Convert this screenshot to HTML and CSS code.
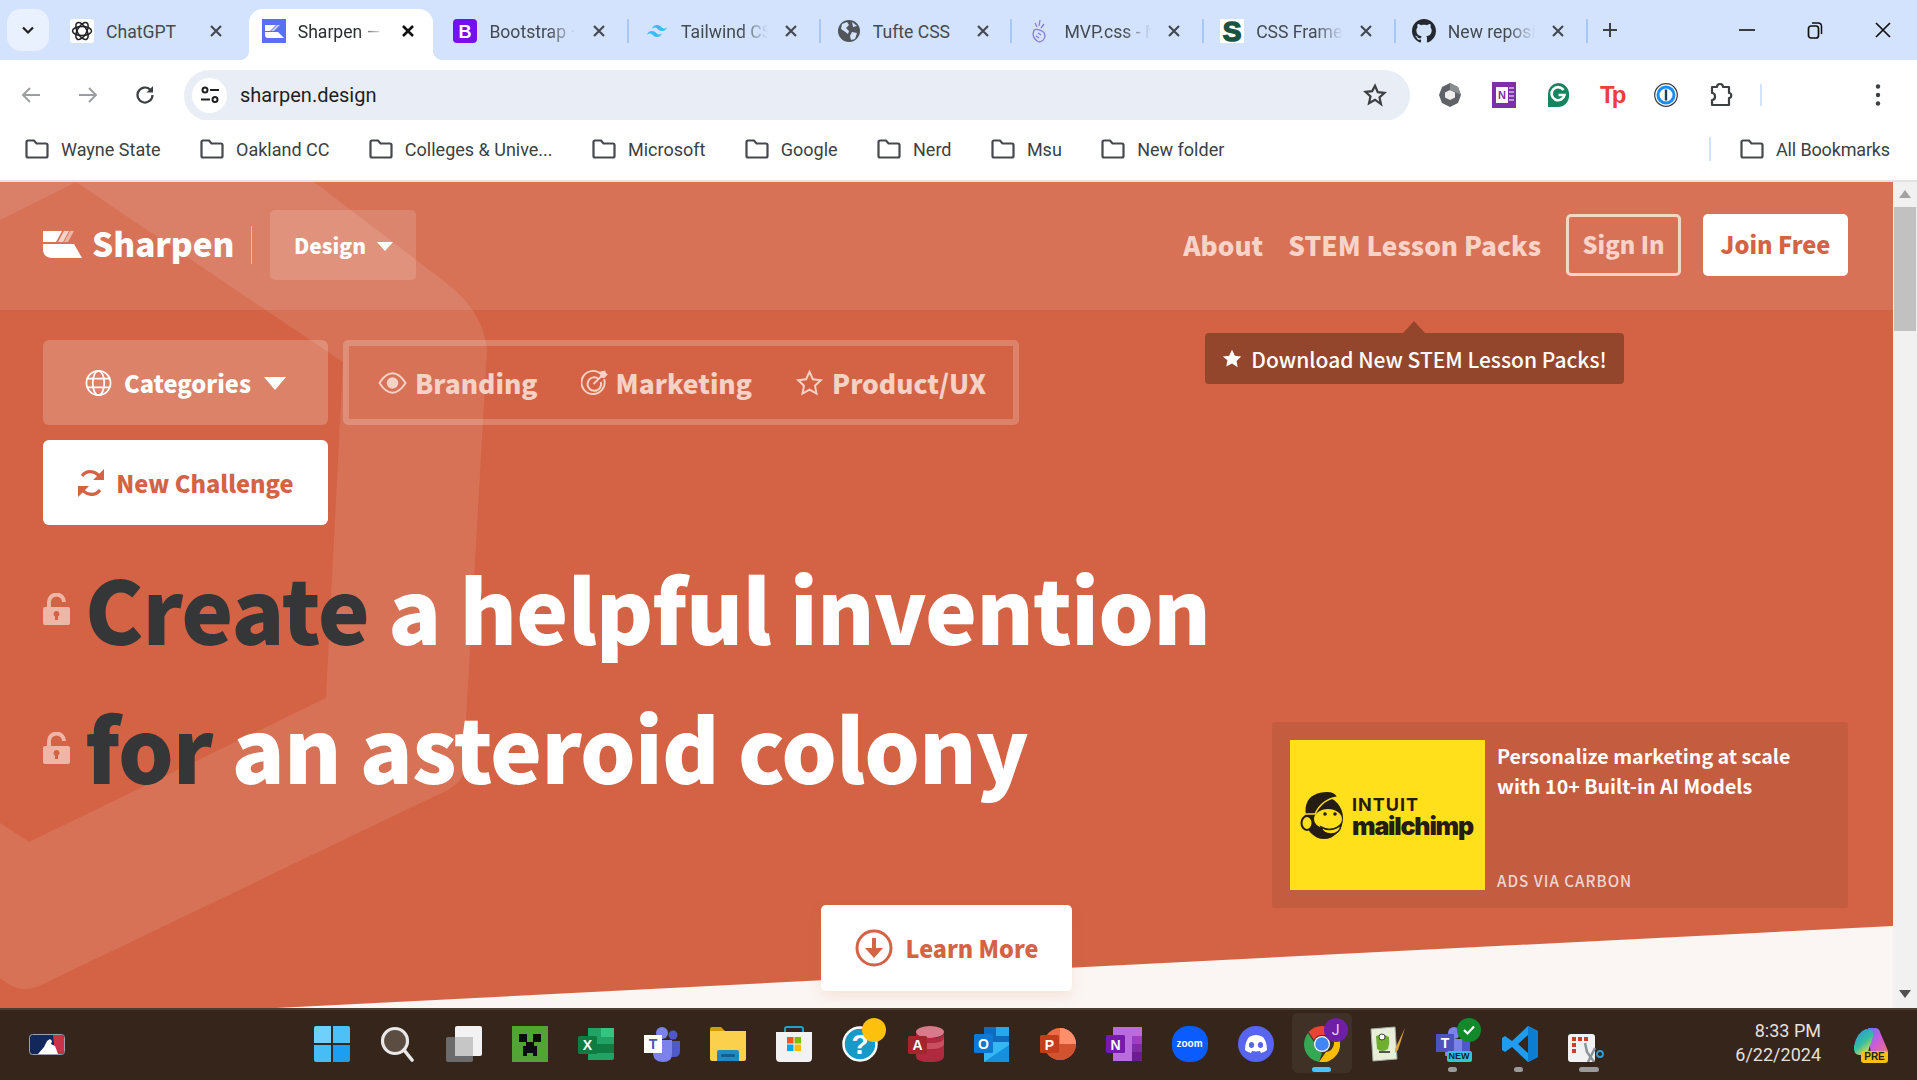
FILE: index.html
```html
<!DOCTYPE html>
<html lang="en">
<head>
<meta charset="utf-8">
<title>Sharpen</title>
<link rel="stylesheet" href="styles.css">
</head>
<body>
<header class="tabstrip">
  <div class="tabsearch"><svg width="16" height="16" viewBox="0 0 16 16"><path d="M3 5.500l5 5 5-5" fill="none" stroke="#1f1f1f" stroke-width="2.200"/></svg></div>
  <div class="tab"><span class="fav"><svg viewBox="0 0 24 24"><rect width="24" height="24" rx="3" fill="#fff"/><g fill="none" stroke="#222" stroke-width="1.500"><ellipse cx="12" cy="12" rx="9.500" ry="4.600"/><ellipse cx="12" cy="12" rx="9.500" ry="4.600" transform="rotate(60 12 12)"/><ellipse cx="12" cy="12" rx="9.500" ry="4.600" transform="rotate(120 12 12)"/></g></svg></span><span class="title">ChatGPT</span><svg class="x" viewBox="0 0 14 14"><path d="M2 2l10 10M12 2L2 12"/></svg></div>
  <div class="tab active"><span class="tab-bg"></span><span class="fav"><svg viewBox="0 0 24 24"><rect width="24" height="24" fill="#5b6ff2"/><path d="M3 6h11l-6 6H3z" fill="#fff"/><path d="M15 6h3l-6 6H9z" fill="#c5ccfb"/><path d="M3 13h13l6 6H6q-3 0-3-3z" fill="#fff"/></svg></span><span class="title fade">Sharpen — Design</span><svg class="x" viewBox="0 0 14 14"><path d="M2 2l10 10M12 2L2 12"/></svg></div>
  <div class="tab sep"><span class="fav"><svg viewBox="0 0 24 24"><rect width="24" height="24" rx="4" fill="#7311f0"/><text x="12" y="18.500" text-anchor="middle" class="svg-b" font-size="18" fill="#fff">B</text></svg></span><span class="title fade">Bootstrap · The most</span><svg class="x" viewBox="0 0 14 14"><path d="M2 2l10 10M12 2L2 12"/></svg></div>
  <div class="tab sep"><span class="fav"><svg viewBox="0 0 24 24"><path fill="#38bdf8" d="M12 6c-2.670 0-4.330 1.330-5 4 1-1.330 2.170-1.830 3.500-1.500.76.19 1.310.74 1.910 1.350.98 1 2.090 2.150 4.590 2.150 2.670 0 4.330-1.330 5-4-1 1.330-2.170 1.830-3.500 1.500-.76-.19-1.300-.74-1.910-1.350C15.610 7.150 14.500 6 12 6zm-5 6c-2.670 0-4.330 1.330-5 4 1-1.330 2.170-1.830 3.500-1.500.76.19 1.300.74 1.910 1.350C8.390 16.850 9.500 18 12 18c2.670 0 4.330-1.330 5-4-1 1.330-2.170 1.830-3.500 1.500-.76-.19-1.300-.74-1.910-1.350C10.610 13.150 9.500 12 7 12z"/></svg></span><span class="title fade">Tailwind CSS - Rapidly</span><svg class="x" viewBox="0 0 14 14"><path d="M2 2l10 10M12 2L2 12"/></svg></div>
  <div class="tab sep"><span class="fav"><svg viewBox="0 0 24 24"><circle cx="12" cy="12" r="11" fill="#50555c"/><path d="M5 5l5-2 2 3-3 3 3 3-1 3-4-3-3-2zM15 13l5 1-2 6-4 1-1-4zM15 3l5 4-4 1z" fill="#d3e3fd"/></svg></span><span class="title">Tufte CSS</span><svg class="x" viewBox="0 0 14 14"><path d="M2 2l10 10M12 2L2 12"/></svg></div>
  <div class="tab sep"><span class="fav"><svg viewBox="0 0 24 24"><g fill="none" stroke="#8a7be0" stroke-width="1.300"><path d="M6 11c3-2 5 0 8 1 2 1 3 3 3 5 0 3-3 6-6 6-3-1-6-5-6-8z"/><path d="M7 4l2 4M12 1l-1 6M16 5l-3 4M10 14l3 2M8 17l3 2"/></g></svg></span><span class="title fade">MVP.css - Minimalist</span><svg class="x" viewBox="0 0 14 14"><path d="M2 2l10 10M12 2L2 12"/></svg></div>
  <div class="tab sep"><span class="fav"><svg viewBox="0 0 24 24"><rect width="24" height="24" fill="#fff"/><text x="12" y="22" text-anchor="middle" class="svg-b" font-size="28" stroke="#18543f" stroke-width="1.500" fill="#18543f">S</text></svg></span><span class="title fade">CSS Frameworks</span><svg class="x" viewBox="0 0 14 14"><path d="M2 2l10 10M12 2L2 12"/></svg></div>
  <div class="tab sep"><span class="fav"><svg viewBox="0 0 16 16"><path fill="#24292f" d="M8 0C3.580 0 0 3.580 0 8c0 3.540 2.290 6.530 5.470 7.590.4.070.55-.17.55-.38 0-.19-.01-.82-.01-1.490-2.010.37-2.530-.49-2.690-.94-.09-.23-.48-.94-.82-1.130-.28-.15-.68-.52-.01-.53.63-.01 1.080.58 1.230.82.72 1.210 1.870.87 2.330.66.07-.52.28-.87.51-1.070-1.780-.2-3.640-.89-3.640-3.950 0-.87.31-1.590.82-2.150-.08-.2-.36-1.020.08-2.120 0 0 .67-.21 2.200.82.64-.18 1.320-.27 2-.27.68 0 1.360.09 2 .27 1.530-1.040 2.200-.82 2.200-.82.44 1.100.16 1.920.08 2.120.51.56.82 1.270.82 2.150 0 3.070-1.870 3.750-3.650 3.950.29.25.54.73.54 1.480 0 1.070-.01 1.930-.01 2.200 0 .21.15.46.55.38A8.013 8.013 0 0016 8c0-4.420-3.580-8-8-8z"/></svg></span><span class="title fade">New repository</span><svg class="x" viewBox="0 0 14 14"><path d="M2 2l10 10M12 2L2 12"/></svg></div>
  <svg class="plus" width="18" height="18" viewBox="0 0 18 18"><path d="M9 2v14M2 9h14" stroke="#3c4043" stroke-width="2"/></svg>
  <div class="winctl">
    <span class="ctl"><svg width="16" height="16" viewBox="0 0 16 16"><path d="M0 8h16" stroke="#111" stroke-width="1.600"/></svg></span>
    <span class="ctl"><svg width="16" height="18" viewBox="0 0 16 18"><rect x="1.500" y="5" width="10" height="12" rx="2.500" fill="none" stroke="#111" stroke-width="1.700"/><path d="M5 2h6q3.500 0 3.500 3.500V13" fill="none" stroke="#111" stroke-width="1.500"/></svg></span>
    <span class="ctl"><svg width="18" height="18" viewBox="0 0 18 18"><path d="M2 2l14 14M16 2L2 16" stroke="#111" stroke-width="1.700"/></svg></span>
  </div>
</header>

<div class="toolbar">
  <div class="navbtns">
    <svg width="24" height="24" viewBox="0 0 24 24"><path d="M21 12H4M11 5l-7 7 7 7" fill="none" stroke="#9a9da1" stroke-width="1.900"/></svg>
    <svg width="24" height="24" viewBox="0 0 24 24"><path d="M3 12h17M13 5l7 7-7 7" fill="none" stroke="#9a9da1" stroke-width="1.900"/></svg>
    <svg width="24" height="24" viewBox="0 0 24 24"><path d="M19.500 12a7.500 7.500 0 1 1-2.300-5.400" fill="none" stroke="#3c4043" stroke-width="2.200"/><path d="M20 3v6.500h-6.500z" fill="#3c4043"/></svg>
  </div>
  <div class="omnibox">
    <span class="sitechip"><svg width="20" height="20" viewBox="0 0 20 20"><g fill="none" stroke="#1f1f1f" stroke-width="2"><circle cx="5" cy="5" r="2.500"/><path d="M10 5h9M1 14.500h9"/><circle cx="15" cy="14.500" r="2.500"/></g></svg></span>
    <span class="url">sharpen.design</span>
    <svg class="star" width="24" height="24" viewBox="0 0 24 24"><path d="M12 2.800l2.800 6.300 6.800.7-5.100 4.600 1.500 6.800L12 16.700l-6 3.500 1.500-6.800-5.100-4.600 6.800-.7z" fill="none" stroke="#3c4043" stroke-width="2.200"/></svg>
  </div>
  <div class="exts">
    <svg width="24" height="26" viewBox="0 0 24 26"><path d="M12 1l8 4 3 8-3 8-8 4-8-4-3-8 3-8z" fill="#5f6368"/><path d="M12 8l5 2.500v5L12 18l-5-2.500v-5z" fill="#eee"/><path d="M12 1l8 4 3 8-6-3-5-2z" fill="#8a8d90"/></svg>
    <svg width="24" height="26" viewBox="0 0 24 26"><rect width="24" height="26" fill="#7b2fa8"/><rect x="4" y="5" width="12" height="16" fill="#fff"/><text x="10" y="17" text-anchor="middle" class="svg-b" font-size="11" fill="#7b2fa8">N</text><path d="M17 6h5M17 10h5M17 14h5M17 18h5" stroke="#d8b9ea" stroke-width="1.500"/></svg>
    <svg width="24" height="26" viewBox="0 0 24 26"><path d="M12 1a11 11 0 0 1 11 11v2a11 11 0 0 1-11 11H2V12A11 11 0 0 1 12 1z" fill="#15845f"/><path d="M17.500 8a6.500 6.500 0 1 0 1 5h-6" fill="none" stroke="#fff" stroke-width="2.600"/></svg>
    <span class="tp">Tp</span>
    <svg width="24" height="24" viewBox="0 0 24 24"><circle cx="12" cy="12" r="11.300" fill="#fff" stroke="#3a3f44" stroke-width="1.200"/><circle cx="12" cy="12" r="8" fill="none" stroke="#1a8cff" stroke-width="3"/><rect x="10.800" y="6.500" width="2.400" height="11" fill="#1d3e66"/></svg>
    <svg width="26" height="26" viewBox="0 0 26 26"><path d="M3 5h5c0-4 6-4 6 0h6v6c3 0 3 5 0 5v7H3v-5c4 0 4-7 0-7z" fill="none" stroke="#3c4043" stroke-width="2.200" stroke-linejoin="round"/></svg>
    <span class="extsep"></span>
    <svg class="dots" width="6" height="24" viewBox="0 0 6 24"><g fill="#3c4043"><circle cx="3" cy="3.500" r="2.200"/><circle cx="3" cy="12" r="2.200"/><circle cx="3" cy="20.500" r="2.200"/></g></svg>
  </div>
</div>

<nav class="bookmarks">
  <a class="bm"><svg class="folder" viewBox="0 0 24 20"><path d="M1.500 3q0-1.500 1.500-1.500h6l2.500 3H21q1.500 0 1.500 1.500v11q0 1.500-1.500 1.500H3q-1.500 0-1.500-1.500z"/></svg>Wayne State</a>
  <a class="bm"><svg class="folder" viewBox="0 0 24 20"><path d="M1.500 3q0-1.500 1.500-1.500h6l2.500 3H21q1.500 0 1.500 1.500v11q0 1.500-1.500 1.500H3q-1.500 0-1.500-1.500z"/></svg>Oakland CC</a>
  <a class="bm"><svg class="folder" viewBox="0 0 24 20"><path d="M1.500 3q0-1.500 1.500-1.500h6l2.500 3H21q1.500 0 1.500 1.500v11q0 1.500-1.500 1.500H3q-1.500 0-1.500-1.500z"/></svg>Colleges &amp; Unive...</a>
  <a class="bm"><svg class="folder" viewBox="0 0 24 20"><path d="M1.500 3q0-1.500 1.500-1.500h6l2.500 3H21q1.500 0 1.500 1.500v11q0 1.500-1.500 1.500H3q-1.500 0-1.500-1.500z"/></svg>Microsoft</a>
  <a class="bm"><svg class="folder" viewBox="0 0 24 20"><path d="M1.500 3q0-1.500 1.500-1.500h6l2.500 3H21q1.500 0 1.500 1.500v11q0 1.500-1.500 1.500H3q-1.500 0-1.500-1.500z"/></svg>Google</a>
  <a class="bm"><svg class="folder" viewBox="0 0 24 20"><path d="M1.500 3q0-1.500 1.500-1.500h6l2.500 3H21q1.500 0 1.500 1.500v11q0 1.500-1.500 1.500H3q-1.500 0-1.500-1.500z"/></svg>Nerd</a>
  <a class="bm"><svg class="folder" viewBox="0 0 24 20"><path d="M1.500 3q0-1.500 1.500-1.500h6l2.500 3H21q1.500 0 1.500 1.500v11q0 1.500-1.500 1.500H3q-1.500 0-1.500-1.500z"/></svg>Msu</a>
  <a class="bm"><svg class="folder" viewBox="0 0 24 20"><path d="M1.500 3q0-1.500 1.500-1.500h6l2.500 3H21q1.500 0 1.500 1.500v11q0 1.500-1.500 1.500H3q-1.500 0-1.500-1.500z"/></svg>New folder</a>
  <span class="bmsep"></span>
  <a class="bm"><svg class="folder" viewBox="0 0 24 20"><path d="M1.500 3q0-1.500 1.500-1.500h6l2.500 3H21q1.500 0 1.500 1.500v11q0 1.500-1.500 1.500H3q-1.500 0-1.500-1.500z"/></svg>All Bookmarks</a>
</nav>

<div class="viewport">
  <main class="hero">
    <svg class="bgshape" width="520" height="827" viewBox="0 182 520 827"><path fill="#fff" fill-opacity=".1" fill-rule="evenodd" d="M0 182H314L445 282Q484 312 487 350L463 773Q462 785 433 797L41 985Q24 993 10 985L0 978ZM0 220L76 182L343 362L326 698L29 842L0 823Z"/></svg>
    <div class="topnav">
      <svg class="logo" width="39" height="27" viewBox="0 0 39 27"><path d="M0 0H19L13 11H0z" fill="#fff"/><path d="M21 0h5l-6 11h-5z" fill="#f6d3c9"/><path d="M27 0h4l-6 11h-4z" fill="#eeb4a3"/><path d="M0 13H31L39 27H10Q0 27 0 18z" fill="#fff"/></svg>
      <span class="brand">Sharpen</span>
      <span class="brand-div"></span>
      <button class="design">Design<span class="caret small"></span></button>
      <div class="navlinks">
        <a class="navlink">About</a>
        <a class="navlink">STEM Lesson Packs</a>
        <a class="signin">Sign In</a>
        <a class="join">Join Free</a>
      </div>
    </div>
    <div class="tooltip"><svg width="20" height="20" viewBox="0 0 24 24"><path d="M12 1l3.400 7 7.600 1-5.500 5.400 1.300 7.600L12 17.500 5.200 21l1.300-7.600L1 9l7.600-1z" fill="#fff"/></svg>Download New STEM Lesson Packs!</div>
    <div class="controls">
      <div class="row">
        <button class="catbtn"><svg width="27" height="28" viewBox="0 0 28 28"><g fill="none" stroke="#fff" stroke-width="1.800"><circle cx="14" cy="14" r="12.500"/><ellipse cx="14" cy="14" rx="6" ry="12.500"/><path d="M2 9.500h24M2 18.500h24"/></g></svg>Categories<span class="caret"></span></button>
        <div class="filters">
          <span class="filter"><svg width="29" height="24" viewBox="0 0 30 24"><path d="M1.500 12Q8 2 15 2t13.500 10Q22 22 15 22T1.500 12z" fill="none" stroke="#f6d1c6" stroke-width="2"/><circle cx="15" cy="12" r="6" fill="#f6d1c6"/></svg>Branding</span>
          <span class="filter"><svg width="27" height="28" viewBox="0 0 28 28"><g fill="none" stroke="#f6d1c6" stroke-width="2"><path d="M21 5a12 12 0 1 0 3 5"/><path d="M18 9.500a7 7 0 1 0 2.500 3.500"/><path d="M13 15L23 5"/></g><path d="M20 2l5-1 1 3 2 1-4 4-4-1z" fill="#f6d1c6"/></svg>Marketing</span>
          <span class="filter"><svg width="29" height="28" viewBox="0 0 24 24"><path d="M12 2.500l2.900 6.300 6.800.8-5 4.700 1.300 6.800-6-3.400-6 3.400 1.300-6.800-5-4.700 6.800-.8z" fill="none" stroke="#f6d1c6" stroke-width="1.700"/></svg>Product/UX</span>
        </div>
      </div>
      <button class="newbtn"><svg width="28" height="30" viewBox="0 0 28 30"><g fill="none" stroke="#d36344" stroke-width="3.200"><path d="M23.500 11A10.500 10.500 0 0 0 5 8"/><path d="M4.500 19A10.500 10.500 0 0 0 23 22"/></g><path d="M27 1v11H16zM1 29V18h11z" fill="#d36344"/></svg>New Challenge</button>
    </div>
    <div class="lead">
      <h1 class="headline">
        <span class="hline"><svg class="lock" width="27" height="32" viewBox="0 0 27 32"><path d="M2 14h23q2 0 2 2v14q0 2-2 2H2q-2 0-2-2V16q0-2 2-2zm11.500 4a3 3 0 0 0-1.500 5.600V27h3v-3.400a3 3 0 0 0-1.500-5.600z" fill="#eeb6a6"/><path d="M6 14V9a7.500 7.500 0 0 1 15 0" fill="none" stroke="#eeb6a6" stroke-width="4"/></svg><span class="dark">Create</span> a helpful invention</span>
        <span class="hline"><svg class="lock" width="27" height="32" viewBox="0 0 27 32"><path d="M2 14h23q2 0 2 2v14q0 2-2 2H2q-2 0-2-2V16q0-2 2-2zm11.500 4a3 3 0 0 0-1.500 5.600V27h3v-3.400a3 3 0 0 0-1.500-5.600z" fill="#eeb6a6"/><path d="M6 14V9a7.500 7.500 0 0 1 15 0" fill="none" stroke="#eeb6a6" stroke-width="4"/></svg><span class="dark">for</span> an asteroid colony</span>
      </h1>
      <aside class="ad">
        <div class="adimg">
          <svg width="46" height="50" viewBox="0 0 46 50"><ellipse cx="24" cy="28" rx="19" ry="21" fill="#241c15"/><path d="M5 24Q3 6 20 2q14-3 18 5-16 2-23 17z" fill="#241c15" stroke="#ffe01b" stroke-width="1.500"/><ellipse cx="7" cy="33" rx="5.500" ry="7" fill="#ffe01b" stroke="#241c15" stroke-width="2"/><ellipse cx="28" cy="29" rx="14" ry="10" fill="#ffe01b"/><path d="M21 37q10 6 20-2-1 9-10 9-8 0-10-7z" fill="#ffe01b" stroke="#241c15" stroke-width="1.500"/><circle cx="25" cy="24" r="1.800" fill="#241c15"/><circle cx="35" cy="24" r="1.800" fill="#241c15"/></svg>
          <div class="adlogo"><span class="intuit">INTUIT</span><span class="mailchimp">mailchimp</span></div>
        </div>
        <div class="adtext">
          <p class="adcopy">Personalize marketing at scale<br>with 10+ Built-in AI Models</p>
          <p class="advia">ADS VIA CARBON</p>
        </div>
      </aside>
    </div>
    <div class="cta"><button class="learn"><svg width="38" height="38" viewBox="0 0 38 38"><circle cx="19" cy="19" r="17" fill="none" stroke="#d36344" stroke-width="3"/><path d="M19 9v13" stroke="#d36344" stroke-width="4"/><path d="M10 19h18l-9 10z" fill="#d36344"/></svg>Learn More</button></div>
  </main>
  <aside class="scrollbar">
    <span class="arrow up"></span>
    <span class="thumb"></span>
    <span class="arrow down"></span>
  </aside>
</div>

<footer class="taskbar">
  <svg class="mlb" width="36" height="21" viewBox="0 0 36 21"><rect x=".5" y=".5" width="35" height="20" rx="3" fill="#13285a" stroke="#9aa0ac"/><path d="M24 1h8q3 0 3 3v13q0 3-3 3h-6z" fill="#c8334a"/><path d="M9 20l6-7 3-6 3-2 2 2-1 3 4 2 3 8z" fill="#fff"/></svg>
  <div class="apps">
    <svg class="app" viewBox="0 0 36 36"><path d="M0 2q0-2 2-2h15v17H0z" fill="#6fd0fb"/><path d="M19 0h15q2 0 2 2v15H19z" fill="#4cc0f7"/><path d="M0 19h17v17H2q-2 0-2-2z" fill="#47bdf6"/><path d="M19 19h17v15q0 2-2 2H19z" fill="#1b9ff2"/></svg>
    <svg class="app" viewBox="0 0 36 36"><circle cx="15" cy="15" r="12.500" fill="#5c4d42" stroke="#e8e8e8" stroke-width="3.200"/><path d="M24 24l8 10" stroke="#e8e8e8" stroke-width="3.600" stroke-linecap="round"/></svg>
    <svg class="app" viewBox="0 0 36 36"><rect x="0" y="11" width="27" height="25" rx="2" fill="#6b6b6b"/><rect x="9" y="0" width="27" height="30" rx="2" fill="#f2f2f2"/><rect x="9" y="11" width="18" height="19" fill="#c6c6c6"/></svg>
    <svg class="app" viewBox="0 0 36 36"><rect width="36" height="36" fill="#52a535"/><path d="M7 8h8v8H7zM21 8h8v8h-8zM14 16h8v4h3v10h-4v-3h-6v3h-4V20h3z" fill="#0c0c0c"/></svg>
    <svg class="app" viewBox="0 0 36 36"><path d="M10 2h24q2 0 2 2v28q0 2-2 2H10z" fill="#21a366"/><path d="M23 2h13v9H23z" fill="#33c481"/><path d="M10 18h26v9H10z" fill="#107c41"/><rect x="0" y="10" width="19" height="18" rx="1.500" fill="#107c41"/><text x="9.500" y="24" text-anchor="middle" class="svg-b" font-size="14" fill="#fff">X</text></svg>
    <svg class="app" viewBox="0 0 36 36"><circle cx="18" cy="7" r="6" fill="#7b83eb"/><circle cx="29" cy="9" r="4.500" fill="#5059c9"/><path d="M23 15h13v10q0 6-6 6h-7z" fill="#5059c9"/><path d="M9 14h19v14q0 8-9 8t-10-8z" fill="#7b83eb"/><rect x="0" y="9" width="18" height="18" fill="#fff"/><text x="9" y="23" text-anchor="middle" class="svg-b" font-size="14" fill="#4b53bc">T</text></svg>
    <svg class="app" viewBox="0 0 36 36"><path d="M0 3q0-2 2-2h9l4 4H0z" fill="#d29c0c"/><path d="M0 5h36v28q0 2-2 2H2q-2 0-2-2z" fill="#fbd04c"/><path d="M7 35v-9q0-2 2-2h18q2 0 2 2v9z" fill="#1f8bc4"/><rect x="11" y="28" width="14" height="3" rx="1" fill="#0e5f96"/></svg>
    <svg class="app" viewBox="0 0 36 36"><path d="M9 6V3q0-2 2-2h14q2 0 2 2v3" fill="none" stroke="#1ba3c9" stroke-width="2"/><path d="M0 6h36v26q0 4-4 4H4q-4 0-4-4z" fill="#f2f2f2"/><path d="M11 11h6.500v6.500H11z" fill="#f35325"/><path d="M18.500 11H25v6.500h-6.500z" fill="#81bc06"/><path d="M11 18.500h6.500V25H11z" fill="#05a6f0"/><path d="M18.500 18.500H25V25h-6.500z" fill="#ffba08"/></svg>
    <span class="app help"><svg viewBox="0 0 36 36"><circle cx="18" cy="18" r="16.500" fill="#189ac9" stroke="#fff" stroke-width="2.500"/><text x="18" y="28" text-anchor="middle" class="svg-b" font-size="28" fill="#fff">?</text></svg><i class="dot"></i></span>
    <svg class="app" viewBox="0 0 36 36"><ellipse cx="22" cy="6" rx="14" ry="6" fill="#d87a8c"/><path d="M8 6v24q0 6 14 6t14-6V6q0 6-14 6T8 6z" fill="#b02a3f"/><path d="M8 17q0 6 14 6t14-6v-5.500q0 5.500-14 5.500T8 11.500z" fill="#c9505f"/><rect y="10" width="19" height="18" rx="1.500" fill="#a4262c"/><text x="9.500" y="24" text-anchor="middle" class="svg-b" font-size="14" fill="#fff">A</text></svg>
    <svg class="app" viewBox="0 0 36 36"><rect x="10" y="1" width="25" height="18" fill="#0f6cbd"/><path d="M22 1h13v9H22z" fill="#28a8ea"/><path d="M10 16l25 0v20H10z" fill="#35b8f1"/><path d="M10 36l25-17v17z" fill="#1490df"/><rect y="8" width="19" height="19" rx="1.500" fill="#0f78d4"/><text x="9.500" y="23" text-anchor="middle" class="svg-b" font-size="14" fill="#fff">O</text></svg>
    <svg class="app" viewBox="0 0 36 36"><circle cx="20" cy="18" r="16" fill="#ed6c47"/><path d="M20 2a16 16 0 0 1 16 16H20z" fill="#ff8f6b"/><path d="M4 18h32a16 16 0 0 1-16 16 16 16 0 0 1-16-16z" fill="#d35230"/><rect y="9" width="19" height="18" rx="1.500" fill="#c43e1c"/><text x="9.500" y="23.500" text-anchor="middle" class="svg-b" font-size="14" fill="#fff">P</text></svg>
    <svg class="app" viewBox="0 0 36 36"><rect x="7" y="1" width="29" height="34" fill="#ba6bde"/><path d="M26 10h10v8H26z" fill="#9b3fc4"/><path d="M26 18h10v8H26z" fill="#7e2da8"/><path d="M26 26h10v9H26z" fill="#6a1e91"/><rect y="9" width="19" height="18" rx="1.500" fill="#7719aa"/><text x="9.500" y="23.500" text-anchor="middle" class="svg-b" font-size="14" fill="#fff">N</text></svg>
    <span class="app zoomapp">zoom</span>
    <svg class="app" viewBox="0 0 36 36"><circle cx="18" cy="18" r="18" fill="#5865f2"/><path d="M11 11q4-2 7-2t7 2q4 5 4 13-2 2-6 3l-1-2-4 .5-4-.5-1 2q-4-1-6-3 0-8 4-13z" fill="#fff"/><ellipse cx="13.500" cy="19" rx="2.600" ry="3" fill="#5865f2"/><ellipse cx="22.500" cy="19" rx="2.600" ry="3" fill="#5865f2"/></svg>
    <span class="chromewrap"><svg class="app" viewBox="0 0 36 36"><path d="M18 0a18 18 0 0 1 15.600 9H18a9 9 0 0 0-8 5L4.500 6A18 18 0 0 1 18 0z" fill="#ea4335"/><path d="M4 7l8 12a9 9 0 0 0 6 8l-3 9A18 18 0 0 1 4 7z" fill="#34a853"/><path d="M33.600 9A18 18 0 0 1 15 36l7-10a9 9 0 0 0 3-17z" fill="#fbbc04"/><circle cx="18" cy="18" r="8" fill="#fff"/><circle cx="18" cy="18" r="6.800" fill="#4285f4"/></svg><i class="avatar">J</i><i class="runbar"></i></span>
    <svg class="app" viewBox="0 0 36 36"><path d="M1 3l24-2 2 32-24 2z" fill="#e8efd8" stroke="#aaa"/><path d="M6 10q7-3 13 1 1 6-1 12-6 4-11 0z" fill="#6fae2e"/><path d="M9 26h11" stroke="#222" stroke-width="1.500"/><circle cx="12" cy="11" r="3" fill="#fff" stroke="#444"/><path d="M35 2l-7 22-3 3 0-4z" fill="#e0a63a"/></svg>
    <span class="app teamsnew"><svg viewBox="0 0 36 36"><circle cx="18" cy="7" r="6" fill="#7b83eb"/><path d="M23 13h11v12h-11z" fill="#5059c9"/><path d="M9 13h17v17H9z" fill="#7b83eb"/><rect y="8" width="18" height="18" fill="#4b53bc"/><text x="9" y="22" text-anchor="middle" class="svg-b" font-size="14" fill="#fff">T</text></svg><i class="check"><svg width="14" height="14" viewBox="0 0 14 14"><path d="M2 7l3.500 3.500L12 3.500" fill="none" stroke="#fff" stroke-width="2.200"/></svg></i><i class="newtag">NEW</i><i class="pip"></i></span>
    <span class="app vswrap"><svg viewBox="0 0 36 36"><path d="M26 0l10 5v26l-10 5-16-15-7 5-3-2V12l3-2 7 5zM26 9l-10 9 10 9z" fill="#1f9cf0"/><path d="M26 0l10 5v26l-10 5V27V9z" fill="#0c7dd0"/></svg><i class="pip"></i></span>
    <span class="app snip"><svg viewBox="0 0 36 36"><rect x="0" y="8" width="27" height="28" rx="3" fill="#f2f2f2"/><path d="M4 11h4v4H4zM10 11h4v4h-4zM16 11h4v4h-4zM4 17h4v4H4zM4 23h4v4H4z" fill="#c8402a"/><path d="M17 17l2 9 7 10M27 22l-7 14" stroke="#8c949c" stroke-width="2.500" fill="none"/><circle cx="32" cy="28" r="3" fill="none" stroke="#2d9fd8" stroke-width="1.800"/></svg><i class="pip wide"></i></span>
  </div>
  <div class="clock"><span>8:33 PM</span><span>6/22/2024</span></div>
  <span class="copilot"><svg width="36" height="36" viewBox="0 0 36 36"><defs><linearGradient id="cpa" x1="0" y1="0" x2=".6" y2="1"><stop offset="0" stop-color="#2a8fe8"/><stop offset=".6" stop-color="#35c0a0"/><stop offset="1" stop-color="#e8d84a"/></linearGradient><linearGradient id="cpb" x1="0" y1="0" x2="1" y2="1"><stop offset="0" stop-color="#5a7df0"/><stop offset=".5" stop-color="#d05ad8"/><stop offset="1" stop-color="#f07a5f"/></linearGradient></defs><path d="M15 1h7q4 0 5 4l8 19q1 5-4 5H18z" fill="url(#cpb)"/><path d="M13 2Q4 5 1 19q-1 9 6 9h7l6-19q1-7-7-7z" fill="url(#cpa)"/></svg><i class="pre">PRE</i></span>
</footer>
</body>
</html>
```

FILE: styles.css
```css
* { box-sizing: border-box; }
html, body { margin: 0; height: 100%; }
body {
  width: 1917px;
  height: 1080px;
  overflow: hidden;
  display: flex;
  flex-direction: column;
  font-family: "Roboto", "Noto Sans", sans-serif;
  background: #fff;
}
i { font-style: normal; }
button { font: inherit; border: 0; cursor: pointer; }
a { color: inherit; text-decoration: none; }
.svg-b { font-family: "Liberation Sans", sans-serif; font-weight: 700; }

/* tab strip */
.tabstrip {
  height: 60px;
  flex: none;
  display: flex;
  align-items: flex-end;
  background: #d3e3fd;
  padding-left: 7px;
}
.tabsearch {
  width: 42px;
  height: 42px;
  margin: 0 8px 9px 0;
  border-radius: 14px;
  background: #e9f0fe;
  display: flex;
  align-items: center;
  justify-content: center;
}
.tab {
  position: relative;
  width: 191.7px;
  height: 51px;
  padding-left: 13px;
  display: flex;
  align-items: center;
  flex: none;
  color: #444a52;
  font-size: 17.6px;
}
.tab.sep::after {
  content: "";
  position: absolute;
  right: 3px;
  top: 10px;
  width: 2px;
  height: 24px;
  background: #a8c7f5;
}
.tab-bg {
  position: absolute;
  left: 0;
  top: 0;
  width: 184px;
  height: 51px;
  background: #fff;
  border-radius: 14px 14px 0 0;
}
.tab-bg::before, .tab-bg::after {
  content: "";
  position: absolute;
  bottom: 0;
  width: 10px;
  height: 10px;
}
.tab-bg::before { left: -10px; background: radial-gradient(circle at 0 0, transparent 10px, #fff 10.5px); }
.tab-bg::after { right: -10px; background: radial-gradient(circle at 100% 0, transparent 10px, #fff 10.5px); }
.active { color: #2a2d31; }
.fav { position: relative; width: 24px; height: 24px; flex: none; margin-top: -7px; }
.fav svg { display: block; width: 24px; height: 24px; }
.title {
  position: relative;
  width: 99px;
  margin: -6px 0 0 12px;
  white-space: nowrap;
  overflow: hidden;
}
.fade { -webkit-mask-image: linear-gradient(90deg, #000 60%, transparent 88%); mask-image: linear-gradient(90deg, #000 60%, transparent 88%); }
.x {
  position: relative;
  width: 14px;
  height: 14px;
  margin: -7px 0 0 4px;
  flex: none;
  fill: none;
  stroke: #444a52;
  stroke-width: 2.2;
}
.active .x { stroke: #111; stroke-width: 2.6; }
.plus { margin: 0 0 21px 10px; flex: none; }
.winctl { margin-left: auto; display: flex; align-self: stretch; }
.ctl { width: 68px; display: flex; align-items: center; justify-content: center; }

/* toolbar */
.toolbar {
  height: 60px;
  flex: none;
  display: flex;
  align-items: center;
  background: #fff;
  border-radius: 12px 12px 0 0;
  padding-top: 10px;
}
.navbtns { width: 184px; padding-left: 19px; display: flex; gap: 33px; }
.omnibox {
  width: 1226px;
  height: 51px;
  border-radius: 26px;
  background: #e9eef6;
  display: flex;
  align-items: center;
  padding: 0 23px 0 8px;
}
.sitechip {
  width: 35px;
  height: 35px;
  border-radius: 50%;
  background: #fff;
  display: flex;
  align-items: center;
  justify-content: center;
}
.url { margin-left: 13px; font-size: 20px; color: #1f1f1f; }
.star { margin-left: auto; }
.exts { display: flex; align-items: center; margin-left: 28px; gap: 30px; }
.tp { width: 24px; font: 900 24px/1 "Liberation Sans", sans-serif; letter-spacing: -3px; color: #ee3d3d; }
.exts > svg:nth-of-type(5) { margin-left: 1px; }
.extsep { width: 2px; height: 22px; background: #d3e3fd; margin-left: -5px; }
.dots { margin-left: 83px; }

/* bookmarks */
.bookmarks {
  height: 62px;
  flex: none;
  padding: 0 0 2px 25px;
  display: flex;
  align-items: center;
  gap: 39.4px;
  font-size: 18px;
  color: #3c4043;
  background: #fff;
  border-bottom: 2px solid #e3e3e3;
}
.bm { display: flex; align-items: center; gap: 12px; white-space: nowrap; }
.folder { width: 24px; height: 20px; fill: none; stroke: #45494e; stroke-width: 2.2; }
.bmsep { width: 2px; height: 24px; background: #d3e3fd; margin: 0 -10px 0 auto; }
.bm:last-child { margin-right: 27px; letter-spacing: -.15px; }

/* page */
.viewport { flex: 1; min-height: 0; display: flex; }
.hero {
  position: relative;
  width: 1893px;
  display: flex;
  flex-direction: column;
  background: #fbf6f3;
  overflow: hidden;
  font-family: "Noto Sans CJK JP", "Noto Sans", sans-serif;
  color: #fff;
}
.hero::before {
  content: "";
  position: absolute;
  inset: 0;
  background: #d36344;
  clip-path: polygon(0 0, 100% 0, 100% 744px, 0 840px);
}
.bgshape { position: absolute; left: 0; top: 0; }
.topnav, .controls, .lead, .cta { position: relative; }
.topnav {
  height: 128px;
  flex: none;
  display: flex;
  align-items: center;
  padding: 0 45px 0 43px;
  background: rgba(255, 255, 255, .1);
}
.logo { margin-top: -3px; }
.brand { margin-left: 10px; font-size: 33.3px; font-weight: 900; line-height: 1; margin-top: -6px; }
.brand-div { width: 1px; height: 38px; margin: -3px 18px 0 17px; background: rgba(255, 255, 255, .45); }
.design {
  width: 146px;
  height: 70px;
  margin-top: -3px;
  border-radius: 5px;
  background: rgba(255, 255, 255, .14);
  color: #fff;
  font-weight: 900;
  font-size: 21px;
  display: flex;
  align-items: center;
  justify-content: center;
  gap: 11px;
}
.caret {
  width: 0;
  height: 0;
  border-left: 11px solid transparent;
  border-right: 11px solid transparent;
  border-top: 13px solid #fff;
}
.caret.small { border-left-width: 8px; border-right-width: 8px; border-top-width: 9px; margin-top: 4px; }
.navlinks { margin-left: auto; display: flex; align-items: center; margin-top: -2px; color: #fad3c8; font-weight: 900; }
.navlink { font-size: 26.2px; margin-right: 25px; line-height: 1; }
.signin, .join {
  height: 62px;
  border-radius: 5px;
  display: flex;
  align-items: center;
  justify-content: center;
  font-size: 23.6px;
  line-height: 1;
}
.signin { width: 115px; border: 3px solid #fad3c8; margin-right: 22px; }
.join { width: 145px; background: #fff; color: #d36344; }

.tooltip {
  position: absolute;
  left: 1205px;
  top: 151px;
  width: 419px;
  height: 51px;
  background: #94462c;
  border-radius: 4px;
  display: flex;
  align-items: center;
  justify-content: center;
  gap: 9px;
  font-size: 21px;
  font-weight: 500;
  white-space: nowrap;
}
.tooltip::before {
  content: "";
  position: absolute;
  left: 198px;
  top: -12px;
  border-left: 11px solid transparent;
  border-right: 11px solid transparent;
  border-bottom: 12px solid #94462c;
}

.controls { padding: 30px 0 0 43px; flex: none; }
.row { display: flex; gap: 15px; }
.catbtn, .newbtn {
  width: 285px;
  height: 85px;
  border-radius: 6px;
  display: flex;
  align-items: center;
  justify-content: center;
  font-weight: 900;
  font-size: 23.6px;
}
.catbtn { gap: 12px; background: rgba(255, 255, 255, .2); color: #fff; }
.catbtn .caret { margin: 2px 0 0 1px; }
.filters {
  width: 676px;
  height: 85px;
  border: 6px solid rgba(255, 255, 255, .2);
  border-radius: 5px;
  padding-left: 29px;
  display: flex;
  align-items: center;
  gap: 43px;
  color: #f6d1c6;
  font-weight: 900;
  font-size: 26.4px;
}
.filter { display: flex; align-items: center; gap: 8px; }
.newbtn { margin-top: 15px; gap: 11px; background: #fff; color: #d36344; }

.lead { flex: none; height: 383px; display: flex; justify-content: space-between; padding: 0 45px 0 43px; }
.headline { margin: 0; padding-top: 12px; font-size: 87.6px; font-weight: 900; display: flex; flex-direction: column; }
.hline { display: flex; align-items: center; height: 139px; line-height: 139px; white-space: pre; letter-spacing: -.9px; }
.lock { margin-right: 15px; flex: none; margin-top: 4px; }
.dark { color: #343638; }
.ad {
  align-self: flex-end;
  flex: none;
  width: 576px;
  height: 186px;
  padding: 18px;
  background: #c45c40;
  border-radius: 3px;
  display: flex;
  gap: 12px;
}
.adimg {
  width: 195px;
  height: 150px;
  flex: none;
  background: #ffe01b;
  display: flex;
  align-items: center;
  gap: 6px;
  padding: 0 0 0 10px;
  color: #241c15;
}
.adlogo { display: flex; flex-direction: column; font-family: "Inter", sans-serif; font-weight: 900; margin-top: 4px; }
.intuit { font-size: 18px; line-height: 18px; font-weight: 700; letter-spacing: 1px; }
.mailchimp { font-size: 25px; line-height: 24px; letter-spacing: -1.2px; }
.adtext { display: flex; flex-direction: column; justify-content: space-between; }
.adcopy { margin: 0; font-size: 19.6px; line-height: 30px; font-weight: 700; padding-top: 1px; }
.advia { margin: 0; font-size: 15.2px; line-height: 20px; letter-spacing: 1px; color: rgba(255, 255, 255, .75); font-weight: 500; }
.cta { margin-top: -3px; display: flex; justify-content: center; }
.learn {
  width: 251px;
  height: 86px;
  border-radius: 5px;
  background: #fff;
  color: #d36344;
  font-weight: 900;
  font-size: 23.4px;
  display: flex;
  align-items: center;
  justify-content: center;
  gap: 13px;
  box-shadow: 0 6px 14px rgba(211, 99, 68, .12);
}

.scrollbar {
  width: 24px;
  background: #f1f1f1;
  display: flex;
  flex-direction: column;
  align-items: center;
  position: relative;
}
.thumb { width: 22px; height: 124px; background: #c1c1c1; margin-top: 9px; }
.arrow { border-left: 6px solid transparent; border-right: 6px solid transparent; }
.arrow.up { margin-top: 8px; border-bottom: 8px solid #a3a3a3; }
.arrow.down { margin-top: auto; margin-bottom: 10px; border-top: 8px solid #505050; }

/* taskbar */
.taskbar {
  height: 72px;
  flex: none;
  display: flex;
  align-items: center;
  background: #35251a;
  border-top: 2px solid #4a3e35;
  padding: 0 0 2px 29px;
  position: relative;
}
.mlb { flex: none; }
.apps { display: flex; align-items: center; gap: 30px; margin-left: 248.5px; }
.app { display: block; position: relative; width: 36px; height: 36px; flex: none; }
.app > svg { display: block; width: 36px; height: 36px; }
.help .dot { position: absolute; left: 20px; top: -8px; width: 24px; height: 24px; border-radius: 50%; background: #fdc10d; }
.zoomapp {
  border-radius: 45%;
  background: #0b5cff;
  color: #fff;
  font: 700 10px/36px "Liberation Sans", sans-serif;
  text-align: center;
}
.chromewrap { position: relative; display: block; width: 36px; height: 36px; flex: none; }
.chromewrap::before {
  content: "";
  position: absolute;
  left: -12px;
  top: -13px;
  width: 60px;
  height: 60px;
  border-radius: 6px;
  background: rgba(255, 255, 255, .06);
}
.avatar {
  position: absolute;
  left: 20px;
  top: -8px;
  width: 24px;
  height: 24px;
  border-radius: 50%;
  background: #6f1fa6;
  color: #e8d8f0;
  font: 14px/24px "Roboto", sans-serif;
  text-align: center;
}
.runbar { position: absolute; left: 8px; top: 41px; width: 19px; height: 5px; border-radius: 3px; background: #4cc2ff; }
.check { position: absolute; left: 21px; top: -8px; width: 24px; height: 24px; border-radius: 50%; background: #128a2c; display: flex; align-items: center; justify-content: center; }
.newtag { position: absolute; left: 11px; top: 25px; width: 25px; height: 11px; border-radius: 2px; background: #2fc7d8; color: #14202a; font: 700 9px/11px "Liberation Sans", sans-serif; text-align: center; }
.pip { position: absolute; left: 12px; top: 41px; width: 9px; height: 5px; border-radius: 3px; background: #9a9a9a; }
.pip.wide { left: 11px; width: 20px; }
.clock {
  position: absolute;
  right: 96px;
  top: 10px;
  display: flex;
  flex-direction: column;
  align-items: flex-end;
  gap: 2px;
  font-size: 18px;
  line-height: 22px;
  color: #e4e0dc;
}
.copilot { position: absolute; left: 1853px; top: 17px; width: 36px; height: 36px; }
.copilot svg { display: block; }
.pre { position: absolute; left: 8px; top: 24px; width: 27px; height: 12px; border-radius: 3px; background: #fdc10d; color: #222; font: 700 10px/12px "Liberation Sans", sans-serif; text-align: center; }
```
